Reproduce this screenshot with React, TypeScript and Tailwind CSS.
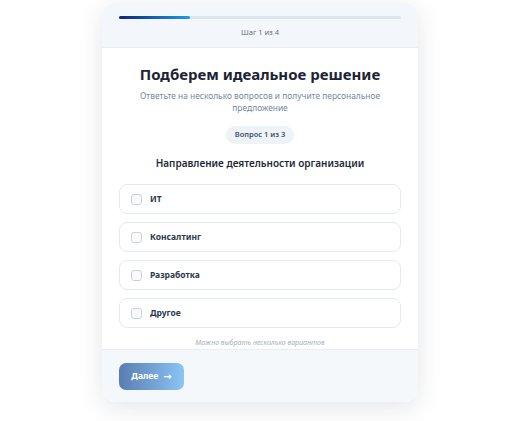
const options = ["ИТ", "Консалтинг", "Разработка", "Другое"];

export default function App() {
  return (
    <div
      className="min-h-[421px] bg-white pt-[3px]"
      style={{ fontFamily: '"Noto Sans", "Open Sans", sans-serif' }}
    >
      <div className="mx-auto w-[316px] overflow-hidden rounded-[14px] bg-white shadow-[0_6px_24px_rgba(30,50,80,0.12)]">
        {/* Header / progress */}
        <div className="border-b border-[#e8edf3] bg-[#f3f6fa] px-[17px] pb-[9px] pt-[13px]">
          <div className="h-[3px] w-full rounded-full bg-[#dde5ee]">
            <div className="h-[3px] w-[25%] rounded-full bg-gradient-to-r from-[#0b2a78] to-[#1f9bf0]" />
          </div>
          <p className="mt-[8px] text-center text-[7.5px] leading-[11px] text-[#5f7287]">
            Шаг 1 из 4
          </p>
        </div>

        {/* Content */}
        <div className="flex flex-col items-center px-[17px] pt-[16px]">
          <h1 className="text-[15px] font-bold leading-[20px] text-[#1b2434]">
            Подберем идеальное решение
          </h1>
          <p className="mt-[6px] max-w-[250px] text-center text-[8.4px] leading-[12px] text-[#7389a0]">
            Ответьте на несколько вопросов и получите персональное предложение
          </p>
          <span className="mt-[12px] flex h-[18px] items-center rounded-full bg-[#eef3f8] px-[9px] text-[7.5px] font-semibold text-[#3f5268]">
            Вопрос 1 из 3
          </span>
          <h2 className="mt-[12px] text-[10px] font-semibold leading-[14px] text-[#1e2a3b]">
            Направление деятельности организации
          </h2>

          <div className="mt-[14px] flex w-full flex-col gap-[8px]">
            {options.map((o) => (
              <label
                key={o}
                className="flex h-[30px] items-center gap-[8px] rounded-[8px] border-[1.5px] border-[#e2e9f1] bg-white px-[11px]"
              >
                <span className="h-[11px] w-[11px] rounded-[3px] border border-[#c9d3de] bg-[#f8fafc]" />
                <span className="text-[8.5px] font-bold text-[#2c3a4e]">{o}</span>
              </label>
            ))}
          </div>

          <p className="mt-[10px] pb-[1px] text-[7px] italic leading-[10px] text-[#a3b0bf]">
            Можно выбрать несколько вариантов
          </p>
        </div>

        {/* Footer */}
        <div className="border-t border-[#e8edf3] bg-[#f5f8fb] px-[17px] pb-[12px] pt-[13px]">
          <button className="flex h-[27px] w-[65px] items-center justify-center gap-[5px] rounded-[7px] bg-gradient-to-r from-[#5a7db3] to-[#8ac5f5] text-[8.5px] font-bold text-white">
            Далее
            <span
              className="text-[10px] leading-none"
              style={{ fontFamily: '"DejaVu Sans", sans-serif' }}
            >
              →
            </span>
          </button>
        </div>
      </div>
    </div>
  );
}
